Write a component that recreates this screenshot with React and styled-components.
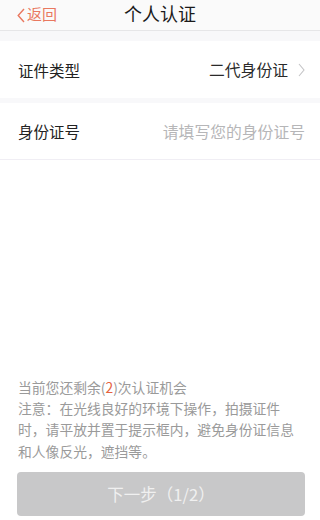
import React from 'react';
import styled, { createGlobalStyle } from 'styled-components';

const GlobalStyle = createGlobalStyle`
  html, body {
    margin: 0;
    padding: 0;
    background: #ffffff;
    font-family: "Noto Sans CJK SC", "Noto Sans", sans-serif;
  }
`

const Page = styled.div`
  width: 320px;
  height: 520px;
  display: flex;
  flex-direction: column;
  background: #fff;
  overflow: hidden;
`

const Header = styled.div`
  height: 31px;
  flex-shrink: 0;
  display: flex;
  align-items: center;
  justify-content: center;
  position: relative;
  background: #fafafa;
  border-bottom: 1px solid #e6e6e8;
  box-sizing: border-box;
`

const Back = styled.div`
  position: absolute;
  left: 17px;
  top: 0;
  height: 100%;
  display: flex;
  align-items: center;
  gap: 2px;
  color: #e9785f;
  font-size: 15px;
`

const Title = styled.div`
  font-size: 18px;
  color: #1a1a1a;
  margin-top: -4px;
`

const Gap = styled.div`
  height: ${p => p.h}px;
  background: #f8f8fa;
  flex-shrink: 0;
`

const Row = styled.div`
  height: 57px;
  flex-shrink: 0;
  display: flex;
  align-items: center;
  justify-content: space-between;
  padding: 0 15px 0 18px;
  background: #fff;
  border-bottom: ${p => (p.line ? '1px solid #f0eef4' : 'none')};
  box-sizing: border-box;
`

const Label = styled.span`
  font-size: 15.5px;
  color: #222;
`

const Value = styled.span`
  display: flex;
  align-items: center;
  gap: 10px;
  font-size: 15.8px;
  color: ${p => (p.muted ? '#b6b6b8' : '#2a2a2a')};
`

const Footer = styled.div`
  margin-top: auto;
  padding: 0 15px 4px 18px;
`

const Note = styled.p`
  margin: 0;
  font-size: 13.8px;
  line-height: 21.3px;
  color: #9a9a9a;
`

const Hot = styled.span`
  color: #e5623e;
`

const NextButton = styled.button`
  display: block;
  width: 288px;
  height: 44px;
  margin: 10px 0 0 -1px;
  border: none;
  border-radius: 4px;
  background: #c8c8c9;
  color: #f0f0f0;
  font-family: "Noto Sans CJK SC", "Noto Sans", sans-serif;
  font-size: 16.5px;
`

export default function App() {
  return (
    <>
      <GlobalStyle />
      <Page>
        <Header>
          <Back>
            <svg width="8" height="15" viewBox="0 0 8 15">
              <path d="M7 1 L1.2 7.5 L7 14" fill="none" stroke="#e9785f" strokeWidth="1.4" />
            </svg>
            <span style={{ marginTop: -3 }}>返回</span>
          </Back>
          <Title>个人认证</Title>
        </Header>
        <Gap h={10} />
        <Row>
          <Label>证件类型</Label>
          <Value>
            二代身份证
            <svg width="7" height="14" viewBox="0 0 7 14">
              <path d="M1 1 L6 7 L1 13" fill="none" stroke="#c4c4c6" strokeWidth="1.1" />
            </svg>
          </Value>
        </Row>
        <Gap h={5} />
        <Row line>
          <Label>身份证号</Label>
          <Value muted>请填写您的身份证号</Value>
        </Row>
        <Footer>
          <Note>当前您还剩余(<Hot>2</Hot>)次认证机会</Note>
          <Note>注意：在光线良好的环境下操作，拍摄证件时，请平放并置于提示框内，避免身份证信息和人像反光，遮挡等。</Note>
          <NextButton>下一步（1/2）</NextButton>
        </Footer>
      </Page>
    </>
  );
}
